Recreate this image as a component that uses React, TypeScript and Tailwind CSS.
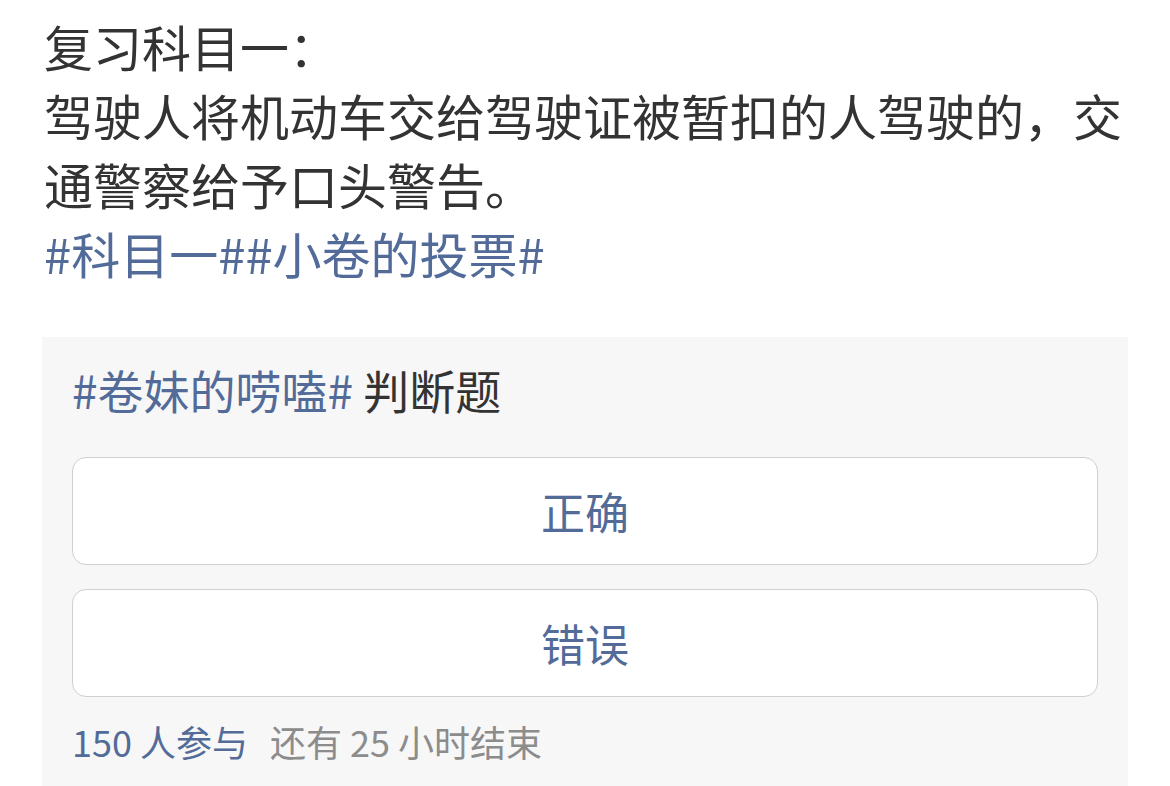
import React from "react";

const font = { fontFamily: '"Noto Sans CJK SC", "Noto Sans", sans-serif' };

export default function App() {
  const options = ["正确", "错误"];

  return (
    <div className="w-[1170px] h-[786px] overflow-hidden bg-white" style={font}>
      <div className="pl-[44px] pt-[11px] w-[1135px] text-[49px] leading-[69px] text-[#333333]">
        <p>复习科目一：</p>
        <p>驾驶人将机动车交给驾驶证被暂扣的人驾驶的，交通警察给予口头警告。</p>
        <p className="text-[#526b99]">#科目一##小卷的投票#</p>
      </div>

      <div className="ml-[42px] mt-[50px] w-[1086px] h-[460px] bg-[#f7f7f7] px-[30px] pt-[24px]">
        <div className="text-[46px] leading-[56px] text-[#333333]">
          <span className="text-[#526b99]">#卷妹的唠嗑#</span> 判断题
        </div>

        <div className="mt-[40px] flex flex-col gap-[24px]">
          {options.map((o) => (
            <button
              key={o}
              type="button"
              className="h-[108px] w-full rounded-[14px] border-[1.5px] border-[#cfcfcf] bg-white text-[44px] text-[#526b99]"
            >
              {o}
            </button>
          ))}
        </div>

        <div className="mt-[19px] text-[36px] leading-[50px]">
          <span className="text-[#526b99]">150 人参与</span>
          <span className="ml-[22px] text-[#8c8c8c]">还有 25 小时结束</span>
        </div>
      </div>
    </div>
  );
}
